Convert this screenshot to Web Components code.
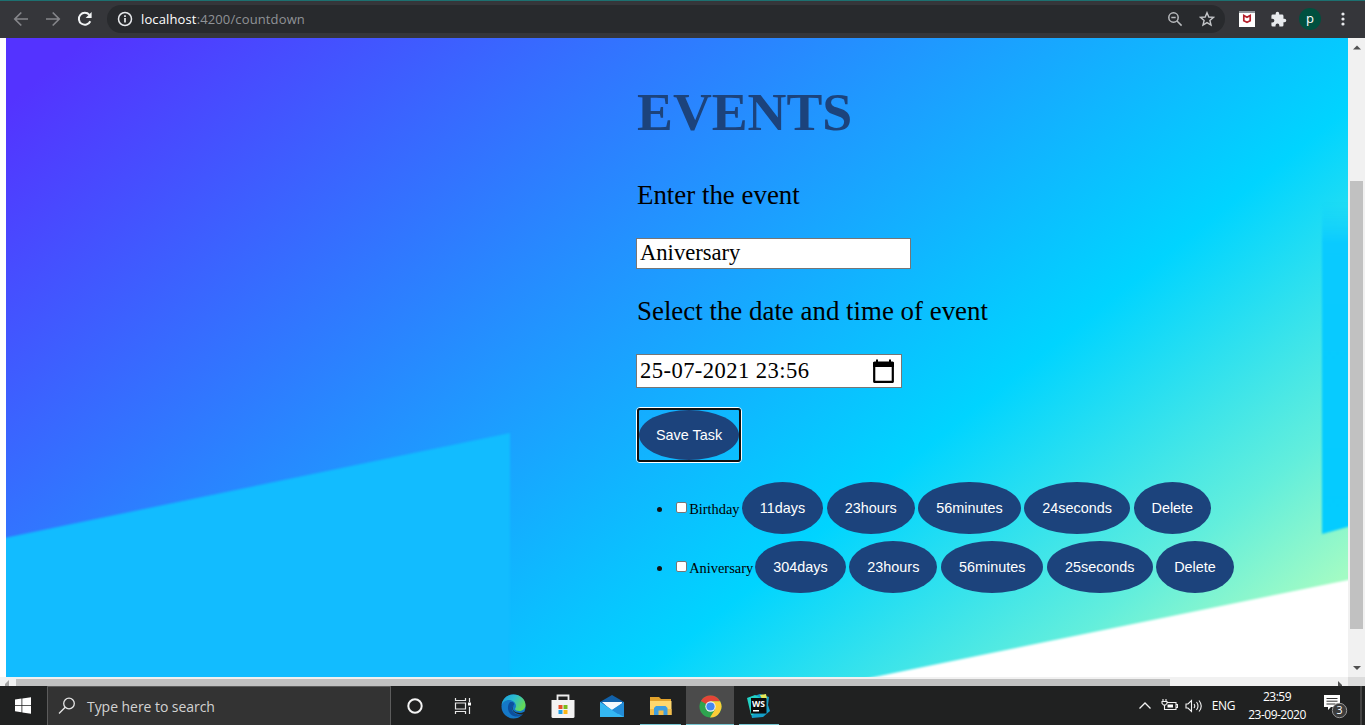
<!DOCTYPE html>
<html lang="en">
<head>
<meta charset="utf-8">
<title>Countdown</title>
<style>
html,body{margin:0;height:100%;overflow:hidden;background:#fff}
</style>
</head>
<body>
<desktop-screen></desktop-screen>
<script>
function define(name, html) {
  const t = document.createElement('template');
  t.innerHTML = html;
  customElements.define(name, class extends HTMLElement {
    constructor() {
      super();
      this.attachShadow({mode: 'open'}).append(t.content.cloneNode(true));
    }
  });
}

define('browser-bar', `
<style>
:host{display:flex;align-items:center;height:38px;box-sizing:border-box;border-top:1px solid #1d7070;padding-bottom:1px;background:#35363a;font:13px "Open Sans","Noto Sans",sans-serif;color:#fff}
svg{display:block;flex:none}
.nav{display:flex;width:107px;box-sizing:border-box;padding-left:13px;gap:16px}
.omni{display:flex;align-items:center;width:1118px;height:28px;border-radius:14px;background:#282a2d;box-sizing:border-box;padding:0 10px}
.url{margin-left:8px;flex:1;line-height:18px;font-size:13px;letter-spacing:.13px;color:#909397}
.url b{font-weight:400;color:#fff}
.tools{display:flex;align-items:center;flex:1}
.avatar{width:22px;height:22px;border-radius:50%;background:#00503f;line-height:20px;text-align:center;margin-left:12px}
</style>
<div class="nav">
<svg width="16" height="16" viewBox="0 0 16 16" fill="none" stroke="#85868a" stroke-width="1.7"><path d="M15 8H2M8.3 1.5 1.8 8l6.5 6.5"/></svg>
<svg width="16" height="16" viewBox="0 0 16 16" fill="none" stroke="#85868a" stroke-width="1.7"><path d="M1 8h13M7.700 1.500 14.200 8l-6.500 6.500"/></svg>
<svg width="16" height="16" viewBox="0 0 16 16" fill="none" stroke="#f1f3f4" stroke-width="2"><path d="M13.300 10.300A6 6 0 1 1 12.400 3.800"/><path d="M14.600 1v6H8.600z" fill="#f1f3f4" stroke="none"/></svg>
</div>
<div class="omni">
<svg width="16" height="16" viewBox="0 0 16 16" fill="none" stroke="#e8eaed" stroke-width="1.500"><circle cx="8" cy="8" r="6.500"/><path d="M8 7v4.500M8 4.300v1.700" stroke-width="1.700"/></svg>
<span class="url"><b>localhost</b>:4200/countdown</span>
<svg width="16" height="16" viewBox="0 0 16 16" fill="none" stroke="#b9bbbe" stroke-width="1.500"><circle cx="6.500" cy="6.500" r="4.700"/><path d="M10 10l4.600 4.600M4.300 6.500h4.400"/></svg>
<svg style="margin-left:16px" width="16" height="16" viewBox="0 0 16 16" fill="none" stroke="#c4c6c9" stroke-width="1.400"><path d="M8 1.700l1.800 4.300 4.700.4-3.600 3.100 1.100 4.600L8 11.600 4 14.100l1.100-4.600L1.500 6.400l4.700-.4z"/></svg>
</div>
<div class="tools">
<svg style="margin-left:14px" width="16" height="16" viewBox="0 0 16 16"><path fill="#fff" d="M0 0h16v16H0z"/><path fill="#92979d" d="M0 0h16v2H0z"/><path d="M4.800 4.500v5.300L8 11.300l3.200-1.500V4.500L8 6.300z" fill="none" stroke="#b5202c" stroke-width="1.700"/></svg>
<svg style="margin-left:15px" width="17" height="17" viewBox="0 0 24 24" fill="#e8eaed"><path d="M20.500 11H19V7a2 2 0 0 0-2-2h-4V3.500a2.500 2.500 0 0 0-5 0V5H4a2 2 0 0 0-2 2v3.800h1.500a2.700 2.700 0 0 1 0 5.400H2V20a2 2 0 0 0 2 2h3.800v-1.500a2.700 2.700 0 0 1 5.400 0V22H17a2 2 0 0 0 2-2v-4h1.500a2.500 2.500 0 0 0 0-5z"/></svg>
<span class="avatar">p</span>
<svg style="margin-left:19px" width="6" height="16" viewBox="0 0 6 16" fill="#e8eaed"><circle cx="3" cy="3" r="1.600"/><circle cx="3" cy="8" r="1.600"/><circle cx="3" cy="13" r="1.600"/></svg>
</div>`);

define('page-backdrop', `
<style>:host{display:block}svg{display:block;width:100%;height:100%}</style>
<svg viewBox="6 38 1342 639" preserveAspectRatio="none">
<defs>
<linearGradient id="g" gradientUnits="userSpaceOnUse" x1="53" y1="66" x2="807" y2="1006">
<stop offset="0" stop-color="#5433ff"/><stop offset=".7" stop-color="#00d4ff"/><stop offset=".9" stop-color="#62eedc"/><stop offset="1" stop-color="#a2fbc4"/>
</linearGradient>
<linearGradient id="r" x1="0" y1="0" x2="0" y2="1"><stop offset="0" stop-color="#10d0ff" stop-opacity="0"/><stop offset=".12" stop-color="#0acaff"/><stop offset="1" stop-color="#04ccff"/></linearGradient>
<filter id="b" x="-5%" y="-5%" width="110%" height="110%" color-interpolation-filters="sRGB"><feGaussianBlur stdDeviation="1.200"/></filter>
</defs>
<path fill="url(#g)" d="M0 30h1360v660H0z"/>
<path fill="#12bcff" filter="url(#b)" d="M-10 541L510 433v270H-10z"/>
<path fill="url(#r)" filter="url(#b)" d="M1322 203h40v320l-40 11z"/>
<path fill="#fff" filter="url(#b)" d="M850 682l498-102 30-6v130H850z"/>
</svg>`);

define('text-box', `
<style>
:host{display:flex;align-items:center;box-sizing:border-box;border:1px solid #767676;background:#fff;padding:0 3px;color:#000}
.v{flex:1;white-space:pre}
</style><span class="v"><slot></slot></span><slot name="icon"></slot>`);

define('round-button', `
<style>
:host{display:block;flex:none;height:52px;box-sizing:border-box;padding:0 18px;border-radius:50%;background:#1c437c;color:#fff;font:14.400px/52px "Liberation Sans",Arial,sans-serif;white-space:nowrap}
</style><slot></slot>`);

define('event-row', `
<style>
:host{display:flex;align-items:center;height:52px;gap:3.600px;font:14.400px/18px "Liberation Serif","Times New Roman",serif;color:#000}
.dot{width:5px;height:5px;border-radius:50%;background:#111;margin-right:10.400px;margin-top:2px}
.box{width:11px;height:11px;box-sizing:border-box;border:1px solid #767676;border-radius:2px;background:#fff;margin:-1px -1.200px 0 0}
.name{margin:1px -1.400px 0 0}
</style>
<span class="dot"></span><span class="box"></span><span class="name"><slot name="name"></slot></span><slot></slot>`);

define('event-form', `
<style>
:host{display:flex;flex-direction:column;align-items:flex-start;box-sizing:border-box;padding:44px 0 0 630px;font-family:"Liberation Serif","Times New Roman",serif;color:#000}
h1{margin:0;font-size:53.800px;line-height:60px;color:#1c437c;padding-left:1px}
p{margin:0;font-size:26.900px;line-height:30px;padding-left:1px}
.focus{border:1px solid #fff;border-radius:4px;margin-top:19px}
.focus div{border:2px solid #101010;border-radius:3px}
.rows{display:flex;flex-direction:column;gap:7px;margin:19px 0 0 20.800px}
</style>
<h1>EVENTS</h1>
<p style="margin-top:38px">Enter the event</p>
<text-box style="margin-top:28px;width:275px;height:31px;font-size:22.600px;line-height:27px;padding-bottom:2px">Aniversary</text-box>
<p style="margin-top:27px">Select the date and time of event</p>
<text-box style="margin-top:28px;width:266px;height:34px;font-size:22.600px;letter-spacing:.43px">25-07-2021 23:56<svg slot="icon" style="margin-right:3px" width="23" height="25" viewBox="0 0 23 25"><path d="M2.200 4h18.600v18.800H2.200z" fill="none" stroke="#000" stroke-width="2.200" stroke-linejoin="round"/><path d="M2.500 2.500H4V.5h2v2h11v-2h2v2h1.500a1.500 1.500 0 0 1 1.500 1.500v4H1V4a1.500 1.500 0 0 1 1.500-1.500z"/></svg></text-box>
<div class="focus"><div><round-button style="height:50px;line-height:51px;padding:0 17px">Save Task</round-button></div></div>
<div class="rows">
<event-row><span slot="name">Birthday</span><round-button>11days</round-button><round-button>23hours</round-button><round-button>56minutes</round-button><round-button>24seconds</round-button><round-button>Delete</round-button></event-row>
<event-row><span slot="name">Aniversary</span><round-button>304days</round-button><round-button>23hours</round-button><round-button>56minutes</round-button><round-button>25seconds</round-button><round-button>Delete</round-button></event-row>
</div>`);

define('page-view', `
<style>
:host{display:grid;grid-template-columns:1348px 17px;grid-template-rows:639px 9px;height:648px;background:#fff}
.doc{display:grid;padding-left:6px}
.doc>*{grid-area:1/1;min-width:0;min-height:0}
event-form{z-index:1}
.v{background:#f1f1f1;display:flex;flex-direction:column;align-items:center}
.v i{width:13px;height:448px;background:#c1c1c1;margin:128px 0 36px}
.h{background:#f1f1f1;display:flex;align-items:flex-end}
.h i{width:1154px;height:7px;background:#c1c1c1;margin:0 168px 0 4px}
.c{background:#dcdcdc}
svg{display:block}
</style>
<div class="doc"><page-backdrop></page-backdrop><event-form></event-form></div>
<div class="v"><svg style="margin-top:7px" width="8" height="8"><path d="M0 4.500 4 .5l4 4z" fill="#505050"/></svg><i></i><svg width="8" height="8"><path d="M0 1h8L4 5z" fill="#505050"/></svg></div>
<div class="h"><svg width="12" height="6"><path d="M9 0v6H5V4z" fill="#a3a3a3"/></svg><i></i><svg width="5" height="5"><path d="M0 0l4 4v1H0z" fill="#505050"/></svg></div>
<div class="c"></div>`);

define('task-slot', `
<style>
:host{display:flex;align-items:center;justify-content:center;width:49px;height:39px;box-sizing:border-box;border-bottom:1px solid transparent;padding-top:2px}
:host([open]){border-bottom-color:#76c6d2}
:host([active]){background:#4b4b4b}
</style><slot></slot>`);

define('task-bar', `
<style>
:host{display:flex;height:39px;background:#202121;color:#fff;font-family:"Open Sans","Noto Sans",sans-serif}
svg{display:block;flex:none}
.start{width:47px;box-sizing:border-box;padding-right:2px;display:flex;align-items:center;justify-content:center}
.search{display:flex;align-items:center;width:344px;box-sizing:border-box;border:1px solid #5c5c5c;border-bottom:0;background:#333;padding-left:10px;gap:11px;font-size:14px;letter-spacing:-.05px;color:#d2d2d2}
.apps{display:flex;flex:1}
.tray{display:flex;align-items:center;font-size:12px}
.clock{width:66px;text-align:center;line-height:18px;font-size:12px;letter-spacing:-.5px;margin:1px 0 0 9px;white-space:nowrap}
</style>
<div class="start"><svg width="16" height="17" viewBox="0 0 16 17" fill="#fff"><path d="M0 2.500 6.500 1.600V8H0zM7.300 1.500 16 .2V8H7.300zM0 8.800h6.500v6.400L0 14.300zM7.300 8.800H16v7.900l-8.700-1.300z"/></svg></div>
<div class="search"><svg width="18" height="18" viewBox="0 0 18 18" fill="none" stroke="#e6e6e6" stroke-width="1.300"><circle cx="11" cy="6.500" r="5.300"/><path d="M7.200 10.300 1 16.500"/></svg><span>Type here to search</span></div>
<div class="apps">
<task-slot style="width:48px"><svg width="16" height="16" viewBox="0 0 16 16"><circle cx="8" cy="8" r="6.700" fill="none" stroke="#f4f4f4" stroke-width="2"/></svg></task-slot>
<task-slot style="width:48px"><svg width="18" height="16" viewBox="0 0 18 16" fill="none" stroke="#e8e8e8" stroke-width="1.200"><path d="M1.500 0v2.500h10V0M1.500 16v-2.500h10V16M1.500 5h10v6h-10zM15.500 0v4M15.500 9v7"/><path d="M14 4.500h3v3h-3z" fill="#fff" stroke="none"/></svg></task-slot>
<task-slot style="margin-left:2px"><svg width="25" height="25" viewBox="0 0 25 25"><defs><linearGradient id="e" x1="0" y1="0" x2="1" y2=".5"><stop stop-color="#199bd8"/><stop offset=".5" stop-color="#2bbcd2"/><stop offset="1" stop-color="#64d957"/></linearGradient></defs><circle cx="12.500" cy="12.500" r="12" fill="#1579c8"/><path d="M.6 11C1.500 4.500 6.500.5 12.500.5c7 0 12 5 12 10.600 0 3.800-3 6-6 6-2.500 0-4.500-.9-4.500-2 0-.8 1-1.200 1-3C15 8.500 11.500 6 8 6 4.500 6 1.600 8.200.6 11z" fill="url(#e)"/><path d="M9.500 7.500C6 11 6 17 10 20.500c3.500 3 9 2.500 12.300-.6-3 1.200-7.500.8-10-1.900-1.900-2-1.900-5 .2-6.500 1.300-.7 1-3.500-3-4z" fill="#0c4f9e"/><path d="M12.500 12c-1.500 2-.7 4.500 1.500 5.800 2.500 1.500 6.500 1.500 8.700.2l1 .3-1.200 2C17 21 11.500 18.500 11.300 14.500c0-1 .5-2 1.200-2.500z" fill="#202121"/></svg></task-slot>
<task-slot><svg width="24" height="25" viewBox="0 0 24 25"><path d="M6.500 8V1.500h11V8" fill="none" stroke="#eee" stroke-width="1.800"/><path d="M.5 6h23v16.500a1.500 1.500 0 0 1-1.500 1.500H2A1.500 1.500 0 0 1 .5 22.500z" fill="#f3f3f3"/><path fill="#e6512b" d="M7.500 11h4v4h-4z"/><path fill="#7aba1c" d="M12.500 11h4v4h-4z"/><path fill="#1d9fe4" d="M7.500 16h4v4h-4z"/><path fill="#fbb717" d="M12.500 16h4v4h-4z"/></svg></task-slot>
<task-slot><svg width="24" height="24" viewBox="0 0 24 24"><path fill="#1161a9" d="M0 8 12 1l12 7v4H0z"/><path fill="#f5f9fc" d="M2 8h20v7l-10 2z"/><path fill="#1d91df" d="M0 8l12 8 12-8v15H0z"/><path fill="#34b7f2" d="M0 8l18 12 6-4v7H0z"/><path fill="#238cd7" d="M24 8v15L12 16z"/></svg></task-slot>
<task-slot open style="width:41px;margin:0 5px 0 4px"><svg width="22" height="20" viewBox="0 0 22 20"><path fill="#e3a32c" d="M0 1h9l2 2h10v5H0z"/><path fill="#ffd76d" d="M0 5h21.500v14H0z"/><path fill="#f3bd48" d="M0 13h21.500v6H0z"/><path fill="#3d9ddf" d="M4 19v-7l2-2h9.500l2 2v7h-4v-4.500h-5V19z"/></svg></task-slot>
<task-slot open active style="width:48px"><svg width="23" height="23" viewBox="0 0 24 24"><circle cx="12" cy="12" r="11.500" fill="#2ea44f"/><path fill="#e44437" d="M12 12 2 6.300A11.500 11.500 0 0 1 22 6.400H12z"/><path fill="#fdcc38" d="M12 6.400h10A11.500 11.500 0 0 1 11.500 23.500l5.300-8.700z"/><circle cx="12" cy="12" r="5.400" fill="#f5f5f5"/><circle cx="12" cy="12" r="4.300" fill="#4687f0"/></svg></task-slot>
<task-slot open style="width:40px;margin-left:5px"><svg width="24" height="24" viewBox="0 0 24 24"><path fill="#159fc8" d="M1 4 13 0l9 3-1 8 2 6-7 6-11 1z"/><path fill="#23d3c5" d="M0 4l8-3 7 4-9 16H4z"/><path fill="#e5e858" d="M13 1l6-1 1 5h-5z"/><path fill="#0b0b0b" d="M4 4h15.500v15.500H4z"/><text x="5" y="12.500" font-family="Open Sans, sans-serif" font-size="8.500" font-weight="700" fill="#fff" textLength="13" lengthAdjust="spacingAndGlyphs">WS</text><path fill="#fff" d="M6 16h6v1.500H6z"/></svg></task-slot>
</div>
<div class="tray">
<svg width="14" height="9" viewBox="0 0 14 9" fill="none" stroke="#f2f2f2" stroke-width="1.300"><path d="M1.500 7.500 7 2l5.500 5.500"/></svg>
<svg style="margin-left:9px" width="17" height="13" viewBox="0 0 17 13" fill="none" stroke="#f2f2f2" stroke-width="1.100"><path d="M6.500 3.500H15v7H3.500V8M15.500 5.500h1v3h-1M2 0v3M5 0v3M1 2.500h5v1.800L4.500 6h-2L1 4.300zM3.500 6v3"/><path d="M6.500 5.500H12v3H6.500z" fill="#fff" stroke="none"/></svg>
<svg style="margin-left:7px" width="18" height="14" viewBox="0 0 18 14" fill="none" stroke="#f2f2f2" stroke-width="1.100"><path d="M1 5v4h2l3.500 3.500v-11L3 5zM9 5q1.500 2 0 4M11.500 3q3 4 0 8M14 1.500q4.500 5.500 0 11"/></svg>
<span style="margin-left:9px;letter-spacing:-.4px">ENG</span>
<div class="clock">23:59<br>23-09-2020</div>
<svg style="margin-left:14px" width="26" height="27" viewBox="0 0 26 27"><path fill="#fff" d="M0 3h16v12H7l-3 3v-3H0z"/><path d="M2.500 6.500h11M2.500 9.200h11M2.500 12h9" stroke="#333"/><circle cx="15.500" cy="18.500" r="7.200" fill="#3c3c3c" stroke="#999"/><text x="15.500" y="22.300" text-anchor="middle" font-family="Open Sans, sans-serif" font-size="10.500" fill="#fff">3</text></svg>
<svg style="margin-left:8px" width="7" height="39"><path d="M3 0v39" stroke="#666"/></svg>
</div>`);

define('desktop-screen', `
<style>:host{display:flex;flex-direction:column;width:1365px;height:725px;overflow:hidden}</style>
<browser-bar></browser-bar><page-view></page-view><task-bar></task-bar>`);
</script>
</body>
</html>
